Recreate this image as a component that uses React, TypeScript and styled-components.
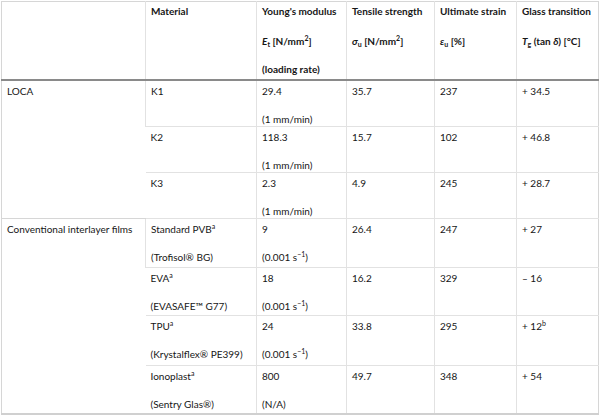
import React from "react";
import styled, { createGlobalStyle } from "styled-components";

const Global = createGlobalStyle`
  html, body { margin: 0; padding: 0; background: #fff; }
  body { font-family: Lato, "Noto Sans", sans-serif; color: #161616; }
`;

const Frame = styled.div`
  width: 600px;
  height: 417px;
  padding: 1px 2px 0 1px;
  box-sizing: border-box;
  overflow: hidden;
`;

const Table = styled.table`
  width: 597px;
  border-collapse: collapse;
  table-layout: fixed;
  font-size: 10px;
  border: 1px solid #d6d6d6;
  border-bottom: 2px solid #d0d0d0;
`;

const Row = styled.tr<{ $h: number }>`
  height: ${(p) => p.$h}px;
`;

const HeadRow = styled.tr`
  height: 78px;
  border-bottom: 2px solid #8a8a8a;
`;

const Th = styled.th`
  text-align: left;
  vertical-align: top;
  font-weight: 700;
  padding: 2px 5px 0;
  border-left: 1px solid #e2e2e2;
  &:first-child { border-left: none; }
`;

const Td = styled.td<{ $first?: boolean }>`
  vertical-align: top;
  padding: 3px 5px 0;
  border-left: 1px solid #e2e2e2;
  border-top: ${(p) => (p.$first ? "1px solid #d6d6d6" : "1px solid #e2e2e2")};
  &:first-child { border-left: none; }
`;

const Line = styled.div`
  line-height: 14px;
  white-space: nowrap;
  & + & { margin-top: 14px; }
`;

const HeadLine = styled(Line)`
  & + & { margin-top: 16px; }
  & + & + & { margin-top: 14px; }
`;

const I = styled.i`
  font-style: italic;
`;

const Sub = styled.sub`
  font-size: 7px;
  vertical-align: -2px;
  line-height: 0;
`;

const Sup = styled.sup`
  font-size: 7px;
  vertical-align: 4px;
  line-height: 0;
`;

type R = {
  group?: string;
  span?: number;
  mat: React.ReactNode;
  matNote?: React.ReactNode;
  mod: string;
  rate: React.ReactNode;
  ts: string;
  us: string;
  gt: React.ReactNode;
  h: number;
};

const s1 = (
  <>
    (0.001 s<Sup>−1</Sup>)
  </>
);

const rows: R[] = [
  { group: "LOCA", span: 3, mat: "K1", mod: "29.4", rate: "(1 mm/min)", ts: "35.7", us: "237", gt: "+ 34.5", h: 46 },
  { mat: "K2", mod: "118.3", rate: "(1 mm/min)", ts: "15.7", us: "102", gt: "+ 46.8", h: 46 },
  { mat: "K3", mod: "2.3", rate: "(1 mm/min)", ts: "4.9", us: "245", gt: "+ 28.7", h: 46 },
  {
    group: "Conventional interlayer films",
    span: 4,
    mat: <>Standard PVB<Sup>a</Sup></>,
    matNote: "(Trofisol® BG)",
    mod: "9",
    rate: s1,
    ts: "26.4",
    us: "247",
    gt: "+ 27",
    h: 49,
  },
  { mat: <>EVA<Sup>a</Sup></>, matNote: "(EVASAFE™ G77)", mod: "18", rate: s1, ts: "16.2", us: "329", gt: "– 16", h: 48 },
  { mat: <>TPU<Sup>a</Sup></>, matNote: "(Krystalflex® PE399)", mod: "24", rate: s1, ts: "33.8", us: "295", gt: <>+ 12<Sup>b</Sup></>, h: 50 },
  { mat: <>Ionoplast<Sup>a</Sup></>, matNote: "(Sentry Glas®)", mod: "800", rate: "(N/A)", ts: "49.7", us: "348", gt: "+ 54", h: 49 },
];

export default function App() {
  return (
    <Frame>
      <Global />
      <Table>
        <colgroup>
          <col style={{ width: 144 }} />
          <col style={{ width: 111 }} />
          <col style={{ width: 90 }} />
          <col style={{ width: 88 }} />
          <col style={{ width: 82 }} />
          <col style={{ width: 82 }} />
        </colgroup>
        <thead>
          <HeadRow>
            <Th />
            <Th>
              <HeadLine>Material</HeadLine>
            </Th>
            <Th>
              <HeadLine>Young's modulus</HeadLine>
              <HeadLine>
                <I>E</I>
                <Sub>t</Sub> [N/mm<Sup>2</Sup>]
              </HeadLine>
              <HeadLine>(loading rate)</HeadLine>
            </Th>
            <Th>
              <HeadLine>Tensile strength</HeadLine>
              <HeadLine>
                <I>σ</I>
                <Sub>u</Sub> [N/mm<Sup>2</Sup>]
              </HeadLine>
            </Th>
            <Th>
              <HeadLine>Ultimate strain</HeadLine>
              <HeadLine>
                <I>ε</I>
                <Sub>u</Sub> [%]
              </HeadLine>
            </Th>
            <Th>
              <HeadLine>Glass transition</HeadLine>
              <HeadLine>
                <I>T</I>
                <Sub>g</Sub> (tan <I>δ</I>) [°C]
              </HeadLine>
            </Th>
          </HeadRow>
        </thead>
        <tbody>
          {rows.map((r, i) => (
            <Row key={i} $h={r.h}>
              {r.group && (
                <Td rowSpan={r.span} $first>
                  <Line>{r.group}</Line>
                </Td>
              )}
              <Td>
                <Line>{r.mat}</Line>
                {r.matNote && <Line>{r.matNote}</Line>}
              </Td>
              <Td>
                <Line>{r.mod}</Line>
                <Line>{r.rate}</Line>
              </Td>
              <Td>
                <Line>{r.ts}</Line>
              </Td>
              <Td>
                <Line>{r.us}</Line>
              </Td>
              <Td>
                <Line>{r.gt}</Line>
              </Td>
            </Row>
          ))}
        </tbody>
      </Table>
    </Frame>
  );
}
